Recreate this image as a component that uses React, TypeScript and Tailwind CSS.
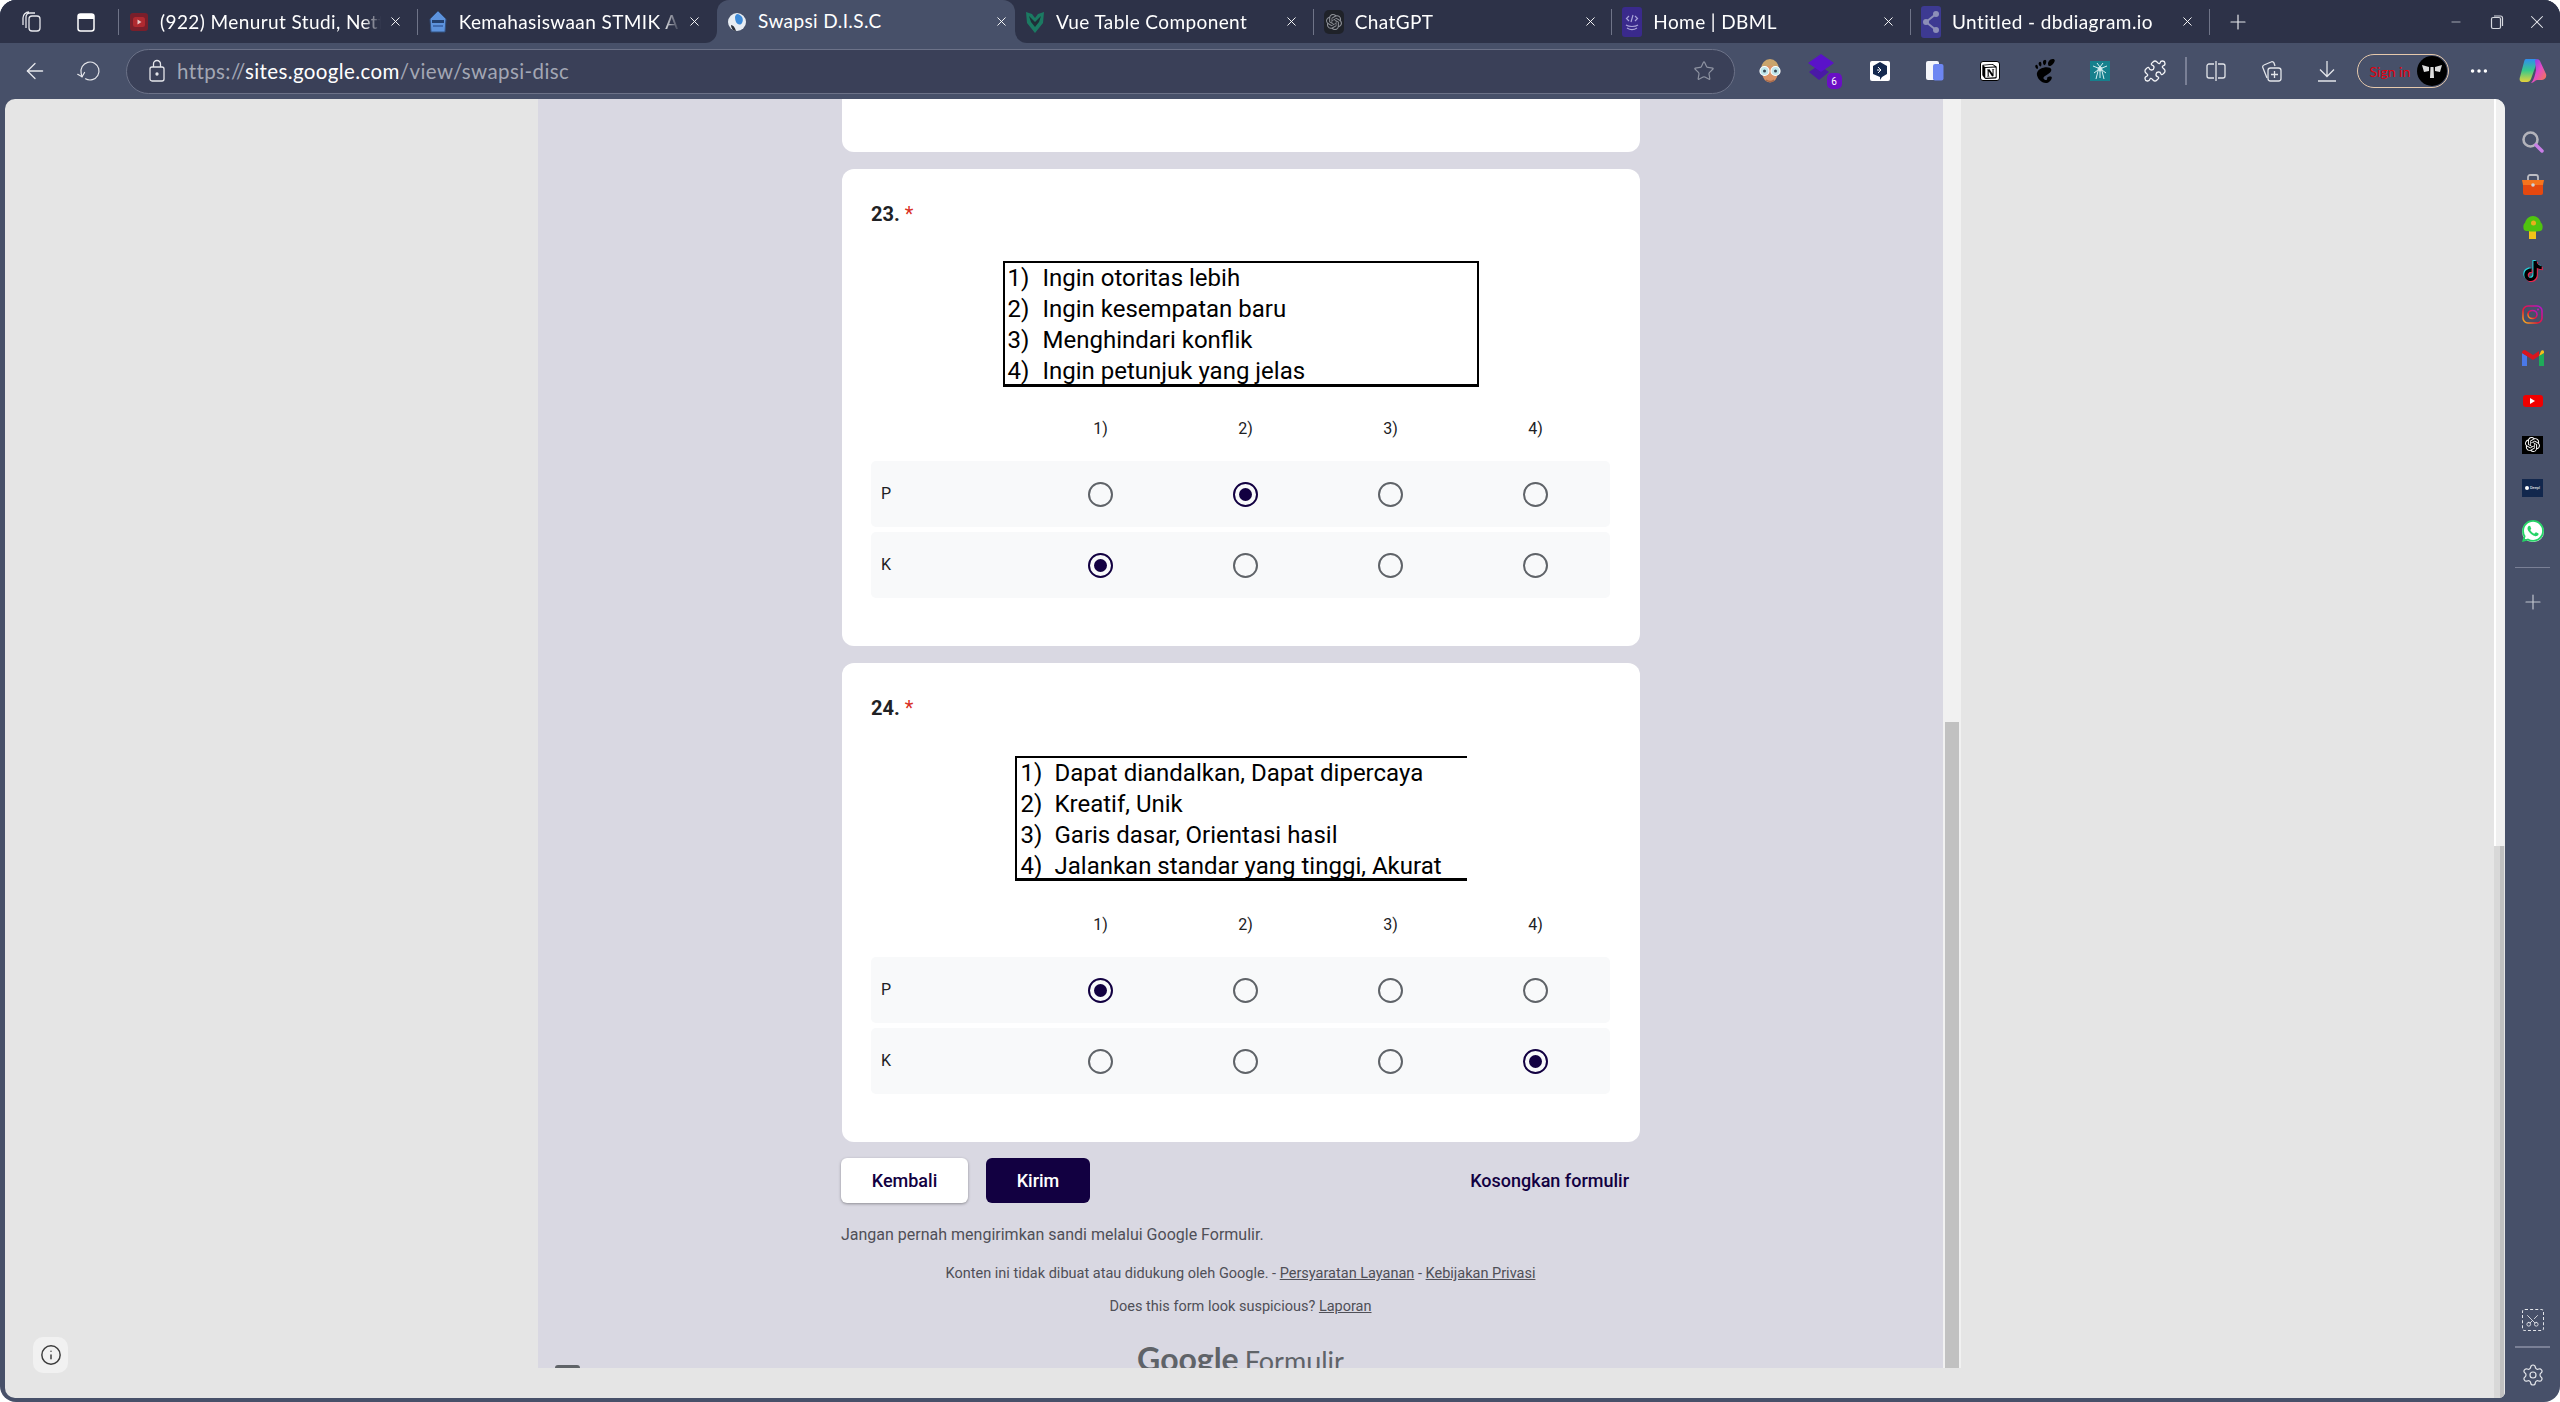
import React from "react";
import { ArrowLeft, RotateCw, Star, Plus, Minus, X, Info, Puzzle, Scissors, Settings, MoreHorizontal } from "lucide-react";
import { SiOpenai, SiNotion, SiGnome, SiTiktok, SiWhatsapp } from "react-icons/si";

const Yt = () => (
  <svg width="20" height="20" viewBox="0 0 20 20"><rect x="1" y="1" width="18" height="18" rx="3" fill="#7a1f2b" /><rect x="4" y="5" width="12" height="10" rx="2.5" fill="#b02a30" /><path d="M8.5 7.5v5l4-2.5z" fill="#e8c8c8" /></svg>
);
const Stmik = () => (
  <svg width="20" height="24" viewBox="0 0 20 24"><path d="M10 1 L18 9 L17 22 H3 L2 9Z" fill="#5d93dd" stroke="#33507f" strokeWidth="1" /><rect x="4" y="10" width="12" height="3" fill="#23406f" /><rect x="5" y="15" width="10" height="2" fill="#3f6bb0" /></svg>
);
const Globe = () => (
  <svg width="20" height="24" viewBox="0 0 20 24"><circle cx="10" cy="12" r="9" fill="#e8edf3" /><path d="M10 4a6 6 0 0 1 5 9c-2 3-5 1-6-1-1-3-2-6 1-8z" fill="#3d8ad8" /><path d="M4 15c2 0 4 2 5 6-3 0-5-3-5-6z" fill="#2a2f3a" /></svg>
);
const VueShield = () => (
  <svg width="20" height="24" viewBox="0 0 20 24"><path d="M1 2 L7 4 L10 8 L13 4 L19 2 L18 13 L10 23 L2 13Z" fill="#1b7a62" /><path d="M4 6 L10 12 L16 6 L14 12 L10 17 L6 12Z" fill="#1f2f38" /></svg>
);
const GptFav = () => (
  <span className="flex h-[24px] w-[20px] items-center justify-center rounded-[5px] bg-[#1f2229]"><SiOpenai size={16} color="#8d9097" /></span>
);
const DbmlFav = () => (
  <span className="flex h-[30px] w-[20px] flex-col items-center justify-center rounded-[3px] bg-[#3a2a8c]">
    <svg width="14" height="20" viewBox="0 0 14 20" fill="none" stroke="#a9a3d8" strokeWidth="1.2"><path d="M4 4 1.5 6.5 4 9M10 4l2.500 2.500L10 9M8 3 6 10" /><path d="M1 13c3 2 9 2 12 0M2 16c3 2 7 2 10 0" /></svg>
  </span>
);
const DbFav = () => (
  <svg width="20" height="32" viewBox="0 0 20 32"><rect width="20" height="32" rx="3" fill="#3d3a92" /><circle cx="5" cy="16" r="3" fill="#8d8fb8" /><circle cx="15" cy="8" r="3" fill="#8d8fb8" /><circle cx="15" cy="24" r="3" fill="#8d8fb8" /><path d="M5 16 15 8M5 16l10 8" stroke="#8d8fb8" strokeWidth="2" /></svg>
);

const tabs1 = [
  { t: "(922) Menurut Studi, Netflix", i: <Yt /> },
  { t: "Kemahasiswaan STMIK AKBA", i: <Stmik /> },
];
const tabs2 = [
  { t: "Vue Table Component", i: <VueShield /> },
  { t: "ChatGPT", i: <GptFav /> },
  { t: "Home | DBML", i: <DbmlFav /> },
  { t: "Untitled - dbdiagram.io", i: <DbFav /> },
];

const uiFont = "font-['Lato',sans-serif]";

function Tab({ t, i, sep = true, first = false }: { t: string; i: React.ReactNode; sep?: boolean; first?: boolean }) {
  return (
    <div className="flex h-[43px] w-[298.67px] shrink-0 items-center pl-[9px]">
      <span className="flex w-[22px] shrink-0 justify-center">{i}</span>
      <span className={`ml-[10px] h-[26px] w-[221px] overflow-hidden whitespace-nowrap text-[19px] leading-[26px] tracking-[0.4px] text-white [mask-image:linear-gradient(to_right,black_92%,transparent_100%)] ${uiFont}`}>{t}</span>
      <X size={15} color="#fff" strokeWidth={1.5} className="ml-[7px] shrink-0" />
      <span className="flex-1" />
      {sep && <span className="h-[26px] w-px shrink-0 bg-[#6f7488]" />}
    </div>
  );
}

function TabStrip() {
  return (
    <div className="flex h-[43px] bg-[#475069]">
      <div className="flex h-[43px] w-[717px] shrink-0 items-center rounded-br-[12px] bg-[#2d3248]">
        <div className="flex h-[43px] w-[119px] shrink-0 items-center">
          <svg width="24" height="24" viewBox="0 0 24 24" fill="none" stroke="#e6e7ec" strokeWidth="1.3" className="ml-[20px]"><rect x="9" y="6" width="11" height="15" rx="3" /><path d="M6 18V7a4 4 0 0 1 4-4h5M3 15V8a6 6 0 0 1 6-6" /></svg>
          <svg width="22" height="22" viewBox="0 0 22 22" fill="none" className="ml-[31px]"><rect x="3" y="3" width="16" height="17" rx="2.500" stroke="#fff" strokeWidth="1.5" /><path d="M3 5.500A2.500 2.500 0 0 1 5.500 3h11A2.500 2.500 0 0 1 19 5.500V8H3z" fill="#fff" /></svg>
          <span className="flex-1" />
          <span className="h-[26px] w-px bg-[#6f7488]" />
        </div>
        {tabs1.map((x, idx) => (
          <Tab key={x.t} t={x.t} i={x.i} sep={idx === 0} />
        ))}
      </div>
      <div className="h-[43px] w-[298px] shrink-0 bg-[#2d3248]">
        <div className="flex h-[43px] items-center rounded-t-[12px] bg-[#475069] pl-[9px]">
          <span className="flex w-[22px] justify-center"><Globe /></span>
          <span className={`ml-[10px] w-[236px] text-[19px] tracking-[0.4px] text-white ${uiFont}`}>Swapsi D.I.S.C</span>
          <X size={15} color="#fff" strokeWidth={1.5} />
        </div>
      </div>
      <div className="flex h-[43px] flex-1 items-center rounded-bl-[12px] bg-[#2d3248]">
        {tabs2.map((x, idx) => (
          <Tab key={x.t} t={x.t} i={x.i} />
        ))}
        <Plus size={24} color="#e6e7ec" strokeWidth={1.2} className="ml-[16px]" />
        <span className="flex-1" />
        <Minus size={14} color="#c9cbd3" strokeWidth={1.3} />
        <svg width="14" height="16" viewBox="0 0 14 16" fill="none" stroke="#d6d8df" strokeWidth="1.2" className="ml-[27px]"><rect x="1.500" y="3.500" width="9" height="11" rx="1.500" /><path d="M4 2h6.500A2 2 0 0 1 12.500 4v8" /></svg>
        <X size={22} color="#e6e7ec" strokeWidth={1.1} className="ml-[22px] mr-[12px]" />
      </div>
    </div>
  );
}

const Face = () => (
  <svg width="24" height="26" viewBox="0 0 24 26"><ellipse cx="12" cy="11" rx="9" ry="10" fill="#c9a46b" /><ellipse cx="12" cy="16" rx="7.500" ry="8.500" fill="#d99468" /><path d="M8 22c3 2 6 2 8 0" stroke="#a86a4a" strokeWidth="1.500" fill="none" /><circle cx="6.500" cy="13" r="4.500" fill="#bfe6ea" stroke="#fff" strokeWidth="1.200" /><circle cx="17.500" cy="13" r="4.500" fill="#bfe6ea" stroke="#fff" strokeWidth="1.200" /><circle cx="6.500" cy="13" r="1.500" fill="#3a4a55" /><circle cx="17.500" cy="13" r="1.500" fill="#3a4a55" /></svg>
);
const Ext6 = () => (
  <span className="relative block h-[34px] w-[34px]">
    <svg width="26" height="28" viewBox="0 0 26 28"><path d="M1 18 11 11l10 7-10 8z" fill="#4a19a6" /><path d="M0 9 13 0l13 9-13 9z" fill="#5a12c9" /></svg>
    <span className="absolute bottom-[-1px] right-0 flex h-[16px] w-[15px] items-center justify-center rounded-[5px] bg-[#6a0fc4] font-['Roboto',sans-serif] text-[10px] text-white">6</span>
  </span>
);
const DeepL = () => (
  <span className="flex h-[20px] w-[20px] items-center justify-center rounded-[2px] bg-white">
    <svg width="16" height="18" viewBox="0 0 16 18"><path d="M8 0 15 4v8l-5 3-2 3v-3L1 12V4z" fill="#14294f" /><path d="M6 5l3 3-3 3M5 8h3" stroke="#fff" strokeWidth="1" fill="none" /></svg>
  </span>
);
const Docs = () => (
  <svg width="18" height="20" viewBox="0 0 18 20"><rect x="0" y="0" width="13" height="19" rx="2" fill="#f4f5fa" /><rect x="7" y="3" width="10.500" height="16.500" rx="2" fill="#6d86f2" /></svg>
);
const Notion = () => (
  <span className="flex h-[20px] w-[20px] items-center justify-center rounded-[3px] border border-black bg-white"><SiNotion size={15} color="#000" /></span>
);
const Teal = () => (
  <span className="flex h-[20px] w-[20px] items-center justify-center bg-[#16808d]">
    <svg width="16" height="18" viewBox="0 0 16 18" fill="none" stroke="#d7eef0" strokeWidth="1"><circle cx="8" cy="7" r="2" fill="#d7eef0" /><path d="M5 1l3 4 3-4M1 4l5 2M15 4l-5 2M2 11l4-3M14 11l-4-3M6 9l-2 8M10 9l2 8M8 9v7" /></svg>
  </span>
);
const Split = () => (
  <svg width="22" height="22" viewBox="0 0 22 22" fill="none" stroke="#e3e5ea" strokeWidth="1.300"><path d="M9 4H4a2 2 0 0 0-2 2v10a2 2 0 0 0 2 2h5M13 4h5a2 2 0 0 1 2 2v10a2 2 0 0 1-2 2h-5M11 1v20" /></svg>
);
const Coll = () => (
  <svg width="24" height="24" viewBox="0 0 24 24" fill="none" stroke="#e3e5ea" strokeWidth="1.300"><path d="M8 19 4 9a2 2 0 0 1 1-3l7-3a2 2 0 0 1 3 1l1 3" /><rect x="9" y="9" width="13" height="13" rx="2.500" /><path d="M15.500 12v7M12 15.500h7" /></svg>
);
const Dl = () => (
  <svg width="22" height="24" viewBox="0 0 22 24" fill="none" stroke="#e3e5ea" strokeWidth="1.300"><path d="M11 2v15M4 10.500l7 7 7-7M2 22h18" /></svg>
);
const Copilot = () => (
  <svg width="30" height="30" viewBox="0 0 30 30">
    <defs>
      <linearGradient id="cpa" x1="0" y1="0" x2="0" y2="1"><stop offset="0" stopColor="#2f8df0" /><stop offset="0.500" stopColor="#38c98a" /><stop offset="1" stopColor="#e6d23a" /></linearGradient>
      <linearGradient id="cpb" x1="0" y1="0" x2="1" y2="1"><stop offset="0" stopColor="#6a3df0" /><stop offset="0.500" stopColor="#e24bc8" /><stop offset="1" stopColor="#f8803a" /></linearGradient>
    </defs>
    <path d="M8 3h9c2 0 3 1 2 3l-6 17c-1 2-2 3-4 3H5c-3 0-4-2-3-5L6 6c.5-2 1-3 2-3z" fill="url(#cpa)" />
    <path d="M17 4c2-1.500 4-1 5 1l6 13c1 3-1 6-4 6h-5c-2 0-3 3-6 3 3-3 4-8 5-13z" fill="url(#cpb)" />
  </svg>
);

function Toolbar() {
  return (
    <div className={`flex h-[56px] items-center bg-[#475069] ${uiFont}`}>
      <ArrowLeft size={26} color="#e6e7ec" strokeWidth={1.200} className="ml-[22px]" />
      <RotateCw size={24} color="#e6e7ec" strokeWidth={1.200} className="ml-[30px] -scale-x-100 rotate-[-60deg]" />
      <div className="ml-[24px] flex h-[45px] w-[1609px] items-center rounded-full border-[1.5px] border-[#6c7288] bg-[#3a4058]">
        <svg width="18" height="24" viewBox="0 0 18 24" fill="none" stroke="#e6e7ec" strokeWidth="1.300" className="ml-[21px]"><rect x="2" y="8" width="14" height="14" rx="2" /><path d="M5.500 8V5a3.500 3.500 0 0 1 7 0v3" /><circle cx="9" cy="15" r="1" fill="#e6e7ec" /></svg>
        <span className="ml-[11px] text-[20.500px] tracking-[0.4px] text-[#a3a7b4]">https://<span className="text-white">sites.google.com</span>/view/swapsi-disc</span>
        <span className="flex-1" />
        <Star size={22} color="#8e93a2" strokeWidth={1.300} className="mr-[19px]" />
      </div>
      <div className="ml-[7px] flex items-center">
        {[<Face />, <Ext6 />, <DeepL />, <Docs />, <Notion />, <SiGnome size={24} color="#000" />, <Teal />, <Puzzle size={24} color="#f2f3f6" strokeWidth={1.300} />].map((n, k) => (
          <span key={k} className="flex h-[40px] w-[55px] items-center justify-center">{n}</span>
        ))}
      </div>
      <span className="ml-[3px] h-[28px] w-[2px] bg-[#7a8096]" />
      <div className="ml-[1px] flex items-center">
        {[<Split />, <Coll />, <Dl />].map((n, k) => (
          <span key={k} className="flex h-[40px] w-[55.500px] items-center justify-center">{n}</span>
        ))}
      </div>
      <div className="ml-[2px] flex h-[34px] w-[92px] items-center justify-between rounded-full border-[1.5px] border-[#e6c9ac] bg-[#475069] pl-[12px] pr-[1px]">
        <span className="font-['Lato',sans-serif] text-[14px] text-[#e2000f]">Sign in</span>
        <span className="flex h-[30px] w-[30px] items-center justify-center rounded-full bg-black">
          <svg width="22" height="16" viewBox="0 0 22 16" fill="#dcdcdc"><path d="M9.500 4h3l.5 11h-4zM1 2l7 2v4L3 9zM21 2l-7 2v4l5 1z" /></svg>
        </span>
      </div>
      <MoreHorizontal size={22} color="#fff" strokeWidth={1.800} className="ml-[19px]" />
      <span className="ml-[28px]"><Copilot /></span>
    </div>
  );
}

const Search = () => (
  <svg width="24" height="24" viewBox="0 0 24 24"><circle cx="9.500" cy="9.500" r="7" fill="none" stroke="#b3b3bb" strokeWidth="2.600" /><path d="M15 15l6 6" stroke="#c87ee6" strokeWidth="3.500" strokeLinecap="round" /></svg>
);
const Toolbox = () => (
  <svg width="24" height="22" viewBox="0 0 24 22"><path d="M7 6V3a2 2 0 0 1 2-2h6a2 2 0 0 1 2 2v3" fill="none" stroke="#bdbdc4" strokeWidth="1.800" /><path d="M1 6h22l-1 5H2z" fill="#f6741d" /><path d="M2 11h20v8a2 2 0 0 1-2 2H4a2 2 0 0 1-2-2z" fill="#e5480f" /><circle cx="12" cy="11" r="1.800" fill="#cfd2d8" /></svg>
);
const Tree = () => (
  <svg width="20" height="24" viewBox="0 0 20 24"><rect x="6" y="14" width="7" height="9" fill="#f2c318" /><path d="M10 0c4 0 7 3 8 7 2 1 2 5 1 7-1 2-16 2-18 0-1-2-1-6 1-7 1-4 4-7 8-7z" fill="#4fc40f" /><circle cx="10.500" cy="7" r="2.500" fill="#e8b01c" /></svg>
);
const Tiktok = () => (
  <span className="relative block h-[22px] w-[20px]">
    <SiTiktok size={20} color="#25d4dc" className="absolute left-[-1px] top-[-1px]" />
    <SiTiktok size={20} color="#f0264f" className="absolute left-[1px] top-[1px]" />
    <SiTiktok size={20} color="#000" className="absolute left-0 top-0" />
  </span>
);
const Insta = () => (
  <svg width="21" height="19" viewBox="0 0 21 19" fill="none">
    <defs><linearGradient id="ig" x1="0" y1="1" x2="1" y2="0"><stop offset="0" stopColor="#f9c31c" /><stop offset="0.400" stopColor="#f2142f" /><stop offset="1" stopColor="#b313d8" /></linearGradient></defs>
    <rect x="1" y="1" width="19" height="17" rx="5" stroke="url(#ig)" strokeWidth="1.600" />
    <ellipse cx="10.500" cy="9.500" rx="4.500" ry="4" stroke="url(#ig)" strokeWidth="1.600" />
    <circle cx="16" cy="4.500" r="1" fill="#c615c0" />
  </svg>
);
const Gmail = () => (
  <svg width="22" height="16" viewBox="0 0 22 16"><path d="M0 3v13h5V6z" fill="#4a78e8" /><path d="M17 6v10h5V3z" fill="#1faa59" /><path d="M17 6l5-3V2c0-2-2-2-3-1z" fill="#f7c01a" /><path d="M0 3l11 7 6-4V1l-6 4L3 0C1 0 0 1 0 3z" fill="#d9141e" /></svg>
);
const Youtube = () => (
  <span className="flex h-[12px] w-[20px] items-center justify-center rounded-[3px] bg-[#f00000]"><span className="h-0 w-0 border-y-[3px] border-l-[5px] border-y-transparent border-l-white" /></span>
);
const GptSide = () => (
  <span className="flex h-[18px] w-[21px] items-center justify-center bg-black"><SiOpenai size={15} color="#fff" /></span>
);
const Deep = () => (
  <span className="flex h-[18px] w-[21px] items-center justify-center gap-[1px] bg-[#12274d] font-['Roboto',sans-serif] text-[4px] text-white"><span className="h-[4px] w-[4px] rounded-full bg-white" />Deepl</span>
);
const Wa = () => (
  <span className="relative flex h-[21px] w-[22px] items-center justify-center rounded-full bg-[#fff]"><SiWhatsapp size={22} color="#25d366" /></span>
);

function Sidebar() {
  const icons = [<Search />, <Toolbox />, <Tree />, <Tiktok />, <Insta />, <Gmail />, <Youtube />, <GptSide />, <Deep />, <Wa />];
  return (
    <div className="flex w-[55px] flex-col items-center pl-[-1px]">
      <div className="mt-[0px] flex h-[21px] w-full" />
      {icons.map((n, k) => (
        <span key={k} className="flex h-[43.300px] w-full items-center justify-center">{n}</span>
      ))}
      <span className="mt-[14px] h-px w-[35px] bg-[#7a8096]" />
      <Plus size={24} color="#c0c3cd" strokeWidth={1.200} className="mt-[22px]" />
      <span className="flex-1" />
      <span className="relative flex h-[22px] w-[22px] items-center justify-center rounded-[3px] border-[1.5px] border-dashed border-[#e3e5ea]">
        <Scissors size={15} color="#e3e5ea" strokeWidth={1.400} className="-rotate-90" />
      </span>
      <span className="mt-[15px] h-[2px] w-[35px] bg-[#7a8096]" />
      <Settings size={24} color="#e3e5ea" strokeWidth={1.200} className="mb-[11px] mt-[15px]" />
    </div>
  );
}

function Radio({ on }: { on?: boolean }) {
  return on ? (
    <span className="flex h-[25px] w-[25px] items-center justify-center rounded-full border-2 border-[#120041]">
      <span className="h-[13px] w-[13px] rounded-full bg-[#120041]" />
    </span>
  ) : (
    <span className="h-[25px] w-[25px] rounded-full border-2 border-[#5f6368]" />
  );
}

function Row({ label, sel }: { label: string; sel: number }) {
  return (
    <div className="grid h-[66px] w-[739px] grid-cols-[157px_repeat(4,145px)] items-center rounded-[5px] bg-[#f8f9fa]">
      <span className="pl-[10px] text-[16px] text-[#202124]">{label}</span>
      {[0, 1, 2, 3].map((c) => (
        <span key={c} className="flex justify-center"><Radio on={c === sel} /></span>
      ))}
    </div>
  );
}

function Question({ n, lines, p, k, boxClass, numW, padL, headerMt, imgMt }: { n: string; lines: string[]; p: number; k: number; boxClass: string; numW: string; padL: string; headerMt: string; imgMt: string }) {
  return (
    <section className="ml-px mb-[17px] w-[798px] rounded-[12px] bg-white pb-[48px] pl-[29px] pr-[30px] pt-[31px]">
      <h2 className="flex h-[28px] items-center text-[20px] font-bold text-[#202124]">
        {n}. <span className="ml-[5px] font-normal text-[#d93025]">*</span>
      </h2>
      <div className={`${imgMt} ${boxClass} ${padL} mx-auto font-['Roboto',sans-serif] text-[24px] leading-[31px] text-black`}>
        {lines.map((l, i) => (
          <div key={l} className="flex whitespace-nowrap">
            <span className={numW}>{i + 1})</span>
            <span>{l}</span>
          </div>
        ))}
      </div>
      <div className={`${headerMt} grid h-[32px] grid-cols-[157px_repeat(4,145px)] items-center text-[16px] text-[#202124]`}>
        <span />
        {["1)", "2)", "3)", "4)"].map((h) => (
          <span key={h} className="text-center">{h}</span>
        ))}
      </div>
      <div className="mt-[16px] flex flex-col gap-[5px]">
        <Row label="P" sel={p} />
        <Row label="K" sel={k} />
      </div>
    </section>
  );
}

function Form() {
  return (
    <div className="relative h-[1269px] w-[1405px] shrink-0 overflow-hidden bg-[#d9d8e2] pl-[303px] font-['Roboto',sans-serif]">
      <div className="w-[799px]">
        <div className="mb-[17px] ml-px h-[53px] w-[798px] rounded-b-[12px] bg-white" />
        <Question n="23" p={1} k={0} imgMt="mt-[33px]" headerMt="mt-[26px]" padL="pl-[3px]" numW="w-[35px]" boxClass="h-[126px] w-[476px] border-2 border-b-[3px] border-black"
          lines={["Ingin otoritas lebih", "Ingin kesempatan baru", "Menghindari konflik", "Ingin petunjuk yang jelas"]} />
        <Question n="24" p={0} k={3} imgMt="mt-[34px]" headerMt="mt-[28px]" padL="pl-[4px]" numW="w-[34px]" boxClass="h-[125px] w-[452px] border-l-2 border-t-2 border-b-[3px] border-black"
          lines={["Dapat diandalkan, Dapat dipercaya", "Kreatif, Unik", "Garis dasar, Orientasi hasil", "Jalankan standar yang tinggi, Akurat"]} />
        <div className="-mt-px flex h-[45px] items-center text-[18px] font-medium text-[#120041]">
          <button className="h-[45px] w-[127px] rounded-[6px] bg-white shadow-[0_1px_3px_rgba(0,0,0,0.35)]">Kembali</button>
          <button className="ml-[18px] h-[45px] w-[104px] rounded-[6px] bg-[#120041] text-white">Kirim</button>
          <span className="ml-auto mr-[11px]">Kosongkan formulir</span>
        </div>
        <p className="mt-[20px] h-[24px] text-[16px] leading-[24px] text-[#4f4f57]">Jangan pernah mengirimkan sandi melalui Google Formulir.</p>
        <p className="mt-[15px] h-[24px] text-center text-[14.500px] leading-[24px] text-[#4f4f57]">
          Konten ini tidak dibuat atau didukung oleh Google. - <span className="underline">Persyaratan Layanan</span> - <span className="underline">Kebijakan Privasi</span>
        </p>
        <p className="mt-[9px] h-[24px] text-center text-[14.500px] leading-[24px] text-[#4f4f57]">
          Does this form look suspicious? <span className="underline">Laporan</span>
        </p>
        <div className="mt-[20px] flex h-[40px] items-baseline justify-center font-['Lato',sans-serif] text-[#5f6368]">
          <span className="text-[32px] font-bold leading-[40px]">Google</span>
          <span className="ml-[6px] text-[27px] leading-[40px]">Formulir</span>
        </div>
      </div>
      <span className="absolute bottom-0 left-[17px] h-[3px] w-[25px] rounded-t-[3px] bg-[#5f6368]" />
    </div>
  );
}

function Page() {
  return (
    <div className="relative flex w-[2500px] flex-1 overflow-hidden rounded-tr-[10px] rounded-tl-[10px] rounded-br-[6px] rounded-bl-[10px] bg-[#e5e5e5]">
      <div className="w-[533px] shrink-0" />
      <div className="flex h-[1269px] shrink-0">
        <Form />
        <div className="h-[1269px] w-[18px] bg-[#f1f1f1] pl-[2px] pt-[623px]">
          <div className="h-[646px] w-[14px] bg-[#c1c1c1]" />
        </div>
      </div>
      <div className="flex-1" />
      <div className="flex w-[11px] shrink-0 flex-col">
        <div className="flex h-[747px]">
          <span className="w-[2px] bg-white" />
          <span className="flex-1 bg-[#f0f0f0]" />
        </div>
        <div className="flex flex-1">
          <span className="w-[6px] bg-[#d8d8d8]" />
          <span className="w-[4px] bg-[#c0c0c0]" />
          <span className="w-[1px] bg-[#e5e5e5]" />
        </div>
      </div>
      <button className="absolute bottom-[25px] left-[28px] flex h-[36px] w-[35px] items-center justify-center rounded-[10px] bg-[#f1f1f1]">
        <Info size={22} color="#3c3c3c" strokeWidth={1.600} />
      </button>
    </div>
  );
}

export default function App() {
  return (
    <div className="flex h-[1402px] w-[2560px] flex-col overflow-hidden rounded-[16px] bg-[#475069]">
      <TabStrip />
      <Toolbar />
      <div className="flex h-[1299px] pl-[5px]">
        <Page />
        <Sidebar />
      </div>
      <div className="h-[4px]" />
    </div>
  );
}
